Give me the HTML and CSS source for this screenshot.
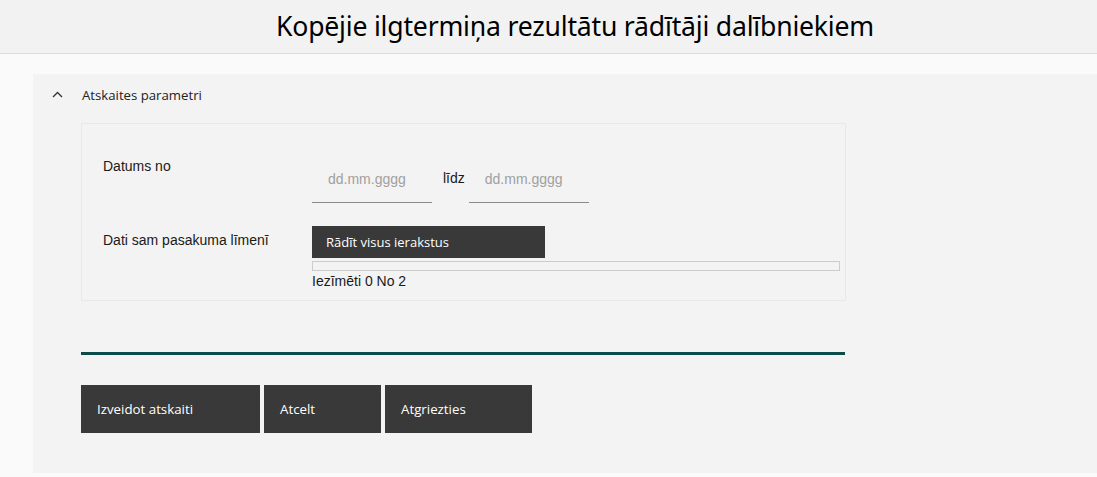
FILE: index.html
```html
<!DOCTYPE html>
<html lang="lv">
<head>
<meta charset="utf-8">
<title>Kopējie ilgtermiņa rezultātu rādītāji dalībniekiem</title>
<link rel="stylesheet" href="styles.css">
</head>
<body>
<header class="top">
  <h1 class="title">Kopējie ilgtermiņa rezultātu rādītāji dalībniekiem</h1>
</header>
<main class="main">
  <section class="panel">
    <div class="panel-head">
      <svg class="chev" width="11" height="7" viewBox="0 0 11 7"><path d="M1 6 L5.5 1.5 L10 6" fill="none" stroke="#333" stroke-width="1.3"/></svg>
      <span class="panel-title">Atskaites parametri</span>
    </div>
    <div class="params">
      <div class="row row-dates">
        <div class="label">Datums no</div>
        <div class="field dates">
          <div class="date-input">dd.mm.gggg</div>
          <span class="lidz">līdz</span>
          <div class="date-input">dd.mm.gggg</div>
        </div>
      </div>
      <div class="row row-level">
        <div class="label">Dati sam pasakuma līmenī</div>
        <div class="field">
          <button class="show-btn">Rādīt visus ierakstus</button>
          <div class="bar"></div>
          <div class="count">Iezīmēti 0 No 2</div>
        </div>
      </div>
    </div>
    <div class="divider"></div>
    <div class="actions">
      <button class="act w1">Izveidot atskaiti</button>
      <button class="act w2">Atcelt</button>
      <button class="act w3">Atgriezties</button>
    </div>
  </section>
</main>
</body>
</html>
```
FILE: styles.css
```css
html, body {
  margin: 0;
  padding: 0;
}
body {
  background: #fafafa;
  font-family: "Open Sans", "Noto Sans", sans-serif;
  color: #111;
  height: 477px;
  overflow: hidden;
}
.top {
  height: 53px;
  background: #f2f2f2;
  border-bottom: 1px solid #dcdcdc;
  display: flex;
  align-items: center;
  justify-content: center;
  padding-left: 53px;
  box-sizing: content-box;
}
.title {
  margin: 0;
  font-family: "Noto Sans", sans-serif;
  font-weight: 400;
  font-size: 26.6px;
  letter-spacing: -0.2px;
  color: #000;
  position: relative;
  top: -1px;
}
.main {
  padding: 20px 0 0 33px;
}
.panel {
  background: #f3f3f3;
  height: 399px;
  box-sizing: border-box;
  padding-top: 9px;
}
.panel-head {
  display: flex;
  align-items: center;
  height: 23px;
}
.chev {
  margin-left: 19px;
  margin-top: -1px;
}
.panel-title {
  margin-left: 19px;
  font-family: "Open Sans", sans-serif;
  font-size: 13.2px;
  color: #222;
}
.params {
  margin: 17px 0 0 48px;
  width: 765px;
  height: 178px;
  box-sizing: border-box;
  border: 1px solid #e8e8e8;
  padding: 27px 0 0 21px;
  font-family: "Liberation Sans", Arial, sans-serif;
  font-size: 14px;
}
.row {
  display: grid;
  grid-template-columns: 209px 1fr;
}
.label {
  color: #1a1a1a;
}
.row-dates .label {
  padding-top: 7px;
}
.dates {
  display: flex;
  align-items: flex-start;
  padding-top: 13px;
}
.date-input {
  width: 120px;
  height: 39px;
  box-sizing: border-box;
  border-bottom: 1px solid #8a8a8a;
  color: #a0a0a0;
  padding: 7px 0 0 16px;
}
.lidz {
  margin: 6px 4px 0 11px;
  color: #1a1a1a;
}
.row-level {
  margin-top: 23px;
}
.row-level .label {
  padding-top: 6px;
}
.show-btn {
  display: block;
  width: 233px;
  height: 32px;
  border: 0;
  background: #393939;
  color: #fff;
  font-family: "Open Sans", sans-serif;
  font-size: 13px;
  text-align: left;
  padding: 0 0 0 14px;
}
.bar {
  margin-top: 3px;
  width: 528px;
  height: 10px;
  box-sizing: border-box;
  border: 1px solid #cccccc;
}
.count {
  margin-top: 2px;
  color: #1a1a1a;
}
.divider {
  margin: 51px 0 0 48px;
  width: 764px;
  height: 3px;
  background: #0b4c4a;
}
.actions {
  margin: 30px 0 0 48px;
  display: flex;
  gap: 4px;
}
.act {
  height: 48px;
  border: 0;
  background: #393939;
  color: #fff;
  font-family: "Open Sans", sans-serif;
  font-size: 13.3px;
  text-align: left;
  padding: 0 0 0 16px;
}
.w1 { width: 179px; }
.w2 { width: 117px; }
.w3 { width: 147px; }
```
